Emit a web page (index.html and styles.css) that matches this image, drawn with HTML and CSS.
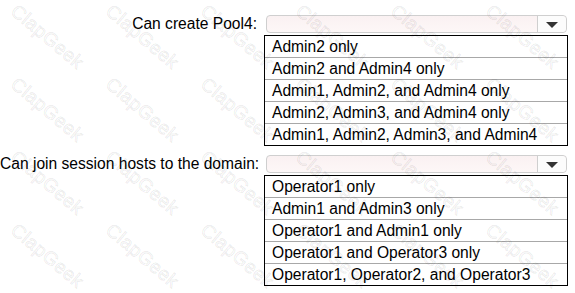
FILE: index.html
```html
<!DOCTYPE html>
<html>
<head>
<meta charset="utf-8">
<link rel="stylesheet" href="styles.css">
</head>
<body>
<div class="page">
  <div class="item">
    <div class="label">Can create Pool4:</div>
    <div class="select"><span class="field"></span><span class="btn"><span class="arrow"></span></span></div>
    <div class="spacer"></div>
    <ul class="options">
      <li>Admin2 only</li>
      <li>Admin2 and Admin4 only</li>
      <li>Admin1, Admin2, and Admin4 only</li>
      <li>Admin2, Admin3, and Admin4 only</li>
      <li>Admin1, Admin2, Admin3, and Admin4</li>
    </ul>
  </div>
  <div class="item second">
    <div class="label">Can join session hosts to the domain:</div>
    <div class="select"><span class="field"></span><span class="btn"><span class="arrow"></span></span></div>
    <div class="spacer"></div>
    <ul class="options">
      <li>Operator1 only</li>
      <li>Admin1 and Admin3 only</li>
      <li>Operator1 and Admin1 only</li>
      <li>Operator1 and Operator3 only</li>
      <li>Operator1, Operator2, and Operator3</li>
    </ul>
  </div>
</div>
<div class="watermark">
  <span>ClapGeek</span><span>ClapGeek</span><span>ClapGeek</span><span>ClapGeek</span><span>ClapGeek</span><span>ClapGeek</span>
  <span>ClapGeek</span><span>ClapGeek</span><span>ClapGeek</span><span>ClapGeek</span><span>ClapGeek</span><span>ClapGeek</span>
  <span>ClapGeek</span><span>ClapGeek</span><span>ClapGeek</span><span>ClapGeek</span><span>ClapGeek</span><span>ClapGeek</span>
  <span>ClapGeek</span><span>ClapGeek</span><span>ClapGeek</span><span>ClapGeek</span><span>ClapGeek</span><span>ClapGeek</span>
</div>
</body>
</html>
```
FILE: styles.css
```css
html, body {
  margin: 0;
  padding: 0;
  background: #fff;
}
body {
  width: 575px;
  height: 293px;
  overflow: hidden;
  position: relative;
  font-family: "Liberation Sans", Arial, sans-serif;
  font-size: 15.6px;
  color: #000;
}
.page {
  padding-top: 15px;
}
.item {
  display: grid;
  grid-template-columns: 257px 304px;
  column-gap: 7px;
  row-gap: 2px;
}
.item.second {
  margin-top: 9px;
}
.label {
  text-align: right;
  white-space: nowrap;
  align-self: center;
  line-height: 18px;
}
.select {
  margin-left: 2px;
  width: 301px;
  height: 18px;
  box-sizing: border-box;
  border: 1px solid #cfcfcf;
  border-radius: 4px;
  background: linear-gradient(#faf1f2, #fdf7f7);
  display: flex;
}
.field {
  flex: 1;
}
.btn {
  width: 28px;
  border-left: 1px solid #cfcfcf;
  display: flex;
  align-items: center;
  justify-content: center;
  background: #fcfcfc;
  border-radius: 0 4px 4px 0;
}
.arrow {
  width: 0;
  height: 0;
  border-left: 6px solid transparent;
  border-right: 6px solid transparent;
  border-top: 6px solid #333;
  margin-top: 1px;
}
.options {
  list-style: none;
  margin: 0;
  padding: 0;
  border: 1px solid #000;
  width: 304px;
  box-sizing: border-box;
}
.options li {
  height: 21px;
  line-height: 21px;
  padding-left: 7px;
  white-space: nowrap;
  border-top: 1px solid #a8a8a8;
}
.options li:first-child {
  border-top: 0;
}
.watermark {
  position: absolute;
  inset: 0;
  overflow: hidden;
  pointer-events: none;
  display: grid;
  grid-template-columns: repeat(6, 95px);
  grid-template-rows: repeat(4, 73px);
  justify-items: center;
  align-items: center;
}
.watermark span {
  display: block;
  transform: rotate(40deg);
  font-family: "Liberation Sans", Arial, sans-serif;
  font-size: 19px;
  color: rgba(0, 0, 0, 0.02);
  -webkit-text-stroke: 1px rgba(0, 0, 0, 0.08);
  white-space: nowrap;
  letter-spacing: 0.5px;
}
```
